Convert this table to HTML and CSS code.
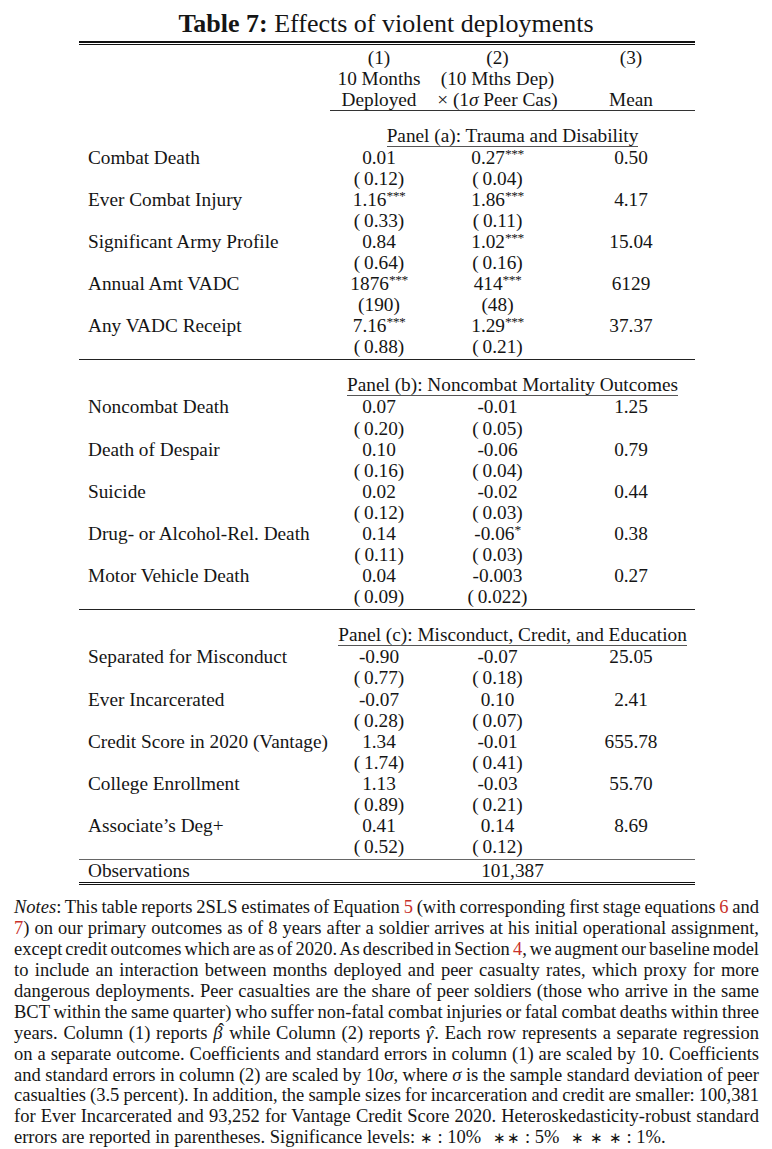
FILE: index.html
```html
<!DOCTYPE html>
<html lang="en">
<head>
<meta charset="utf-8">
<title>Table 7: Effects of violent deployments</title>
<link rel="stylesheet" href="styles.css">
</head>
<body>
<h1 class="title"><b>Table 7:</b> Effects of violent deployments</h1>

<div class="tbl">
  <div class="toprule"></div>

  <div class="grid head">
    <div></div><div class="c">(1)</div><div class="c">(2)</div><div class="c c3">(3)</div>
    <div></div><div class="c">10 Months</div><div class="c">(10 Mths Dep)</div><div class="c c3"></div>
    <div></div><div class="c">Deployed</div><div class="c">× (1<i>σ</i> Peer Cas)</div><div class="c c3">Mean</div>
  </div>
  <div class="cmid"></div>

  <div class="panel-head"><span>Panel (a): Trauma and Disability</span></div>
  <div class="grid body">
    <div class="lab">Combat Death</div><div class="c">0.01</div><div class="c">0.27<sup class="st">***</sup></div><div class="c c3">0.50</div>
    <div></div><div class="c">(&thinsp;0.12)</div><div class="c">(&thinsp;0.04)</div><div></div>
    <div class="lab">Ever Combat Injury</div><div class="c">1.16<sup class="st">***</sup></div><div class="c">1.86<sup class="st">***</sup></div><div class="c c3">4.17</div>
    <div></div><div class="c">(&thinsp;0.33)</div><div class="c">(&thinsp;0.11)</div><div></div>
    <div class="lab">Significant Army Profile</div><div class="c">0.84</div><div class="c">1.02<sup class="st">***</sup></div><div class="c c3">15.04</div>
    <div></div><div class="c">(&thinsp;0.64)</div><div class="c">(&thinsp;0.16)</div><div></div>
    <div class="lab">Annual Amt VADC</div><div class="c">1876<sup class="st">***</sup></div><div class="c">414<sup class="st">***</sup></div><div class="c c3">6129</div>
    <div></div><div class="c">(190)</div><div class="c">(48)</div><div></div>
    <div class="lab">Any VADC Receipt</div><div class="c">7.16<sup class="st">***</sup></div><div class="c">1.29<sup class="st">***</sup></div><div class="c c3">37.37</div>
    <div></div><div class="c">(&thinsp;0.88)</div><div class="c">(&thinsp;0.21)</div><div></div>
  </div>
  <div class="midrule"></div>

  <div class="panel-head"><span>Panel (b): Noncombat Mortality Outcomes</span></div>
  <div class="grid body">
    <div class="lab">Noncombat Death</div><div class="c">0.07</div><div class="c">-0.01</div><div class="c c3">1.25</div>
    <div></div><div class="c">(&thinsp;0.20)</div><div class="c">(&thinsp;0.05)</div><div></div>
    <div class="lab">Death of Despair</div><div class="c">0.10</div><div class="c">-0.06</div><div class="c c3">0.79</div>
    <div></div><div class="c">(&thinsp;0.16)</div><div class="c">(&thinsp;0.04)</div><div></div>
    <div class="lab">Suicide</div><div class="c">0.02</div><div class="c">-0.02</div><div class="c c3">0.44</div>
    <div></div><div class="c">(&thinsp;0.12)</div><div class="c">(&thinsp;0.03)</div><div></div>
    <div class="lab">Drug- or Alcohol-Rel. Death</div><div class="c">0.14</div><div class="c">-0.06<sup class="st">*</sup></div><div class="c c3">0.38</div>
    <div></div><div class="c">(&thinsp;0.11)</div><div class="c">(&thinsp;0.03)</div><div></div>
    <div class="lab">Motor Vehicle Death</div><div class="c">0.04</div><div class="c">-0.003</div><div class="c c3">0.27</div>
    <div></div><div class="c">(&thinsp;0.09)</div><div class="c">(&thinsp;0.022)</div><div></div>
  </div>
  <div class="midrule"></div>

  <div class="panel-head"><span>Panel (c): Misconduct, Credit, and Education</span></div>
  <div class="grid body">
    <div class="lab">Separated for Misconduct</div><div class="c">-0.90</div><div class="c">-0.07</div><div class="c c3">25.05</div>
    <div></div><div class="c">(&thinsp;0.77)</div><div class="c">(&thinsp;0.18)</div><div></div>
    <div class="lab">Ever Incarcerated</div><div class="c">-0.07</div><div class="c">0.10</div><div class="c c3">2.41</div>
    <div></div><div class="c">(&thinsp;0.28)</div><div class="c">(&thinsp;0.07)</div><div></div>
    <div class="lab">Credit Score in 2020 (Vantage)</div><div class="c">1.34</div><div class="c">-0.01</div><div class="c c3">655.78</div>
    <div></div><div class="c">(&thinsp;1.74)</div><div class="c">(&thinsp;0.41)</div><div></div>
    <div class="lab">College Enrollment</div><div class="c">1.13</div><div class="c">-0.03</div><div class="c c3">55.70</div>
    <div></div><div class="c">(&thinsp;0.89)</div><div class="c">(&thinsp;0.21)</div><div></div>
    <div class="lab">Associate’s Deg+</div><div class="c">0.41</div><div class="c">0.14</div><div class="c c3">8.69</div>
    <div></div><div class="c">(&thinsp;0.52)</div><div class="c">(&thinsp;0.12)</div><div></div>
  </div>
  <div class="obsrule"></div>
  <div class="grid obs">
    <div class="lab">Observations</div><div class="c span3">101,387</div>
  </div>
  <div class="bottomrule"></div>
</div>

<p class="notes">
  <span class="nl"><i>Notes</i>: This table reports 2SLS estimates of Equation <span class="ref">5</span> (with corresponding first stage equations <span class="ref">6</span> and</span>
  <span class="nl"><span class="ref">7</span>) on our primary outcomes as of 8 years after a soldier arrives at his initial operational assignment,</span>
  <span class="nl">except credit outcomes which are as of 2020. As described in Section <span class="ref">4</span>, we augment our baseline model</span>
  <span class="nl">to include an interaction between months deployed and peer casualty rates, which proxy for more</span>
  <span class="nl">dangerous deployments. Peer casualties are the share of peer soldiers (those who arrive in the same</span>
  <span class="nl">BCT within the same quarter) who suffer non-fatal combat injuries or fatal combat deaths within three</span>
  <span class="nl">years. Column (1) reports <i class="hat hat-tall">β</i> while Column (2) reports <i class="hat">γ</i>. Each row represents a separate regression</span>
  <span class="nl">on a separate outcome. Coefficients and standard errors in column (1) are scaled by 10. Coefficients</span>
  <span class="nl">and standard errors in column (2) are scaled by 10<i>σ</i>, where <i>σ</i> is the sample standard deviation of peer</span>
  <span class="nl">casualties (3.5 percent). In addition, the sample sizes for incarceration and credit are smaller: 100,381</span>
  <span class="nl">for Ever Incarcerated and 93,252 for Vantage Credit Score 2020. Heteroskedasticity-robust standard</span>
  <span class="nl last">errors are reported in parentheses. Significance levels: <span class="ast">∗</span>&thinsp;: 10%<span class="q"></span><span class="ast">∗∗</span>&thinsp;: 5%<span class="q"></span><span class="ast">∗ ∗ ∗</span>&thinsp;: 1%.</span>
</p>
</body>
</html>
```

FILE: styles.css
```css
html, body {
  margin: 0;
  padding: 0;
  background: #fff;
}

body {
  font-family: "Liberation Serif", "Times New Roman", serif;
  color: #151515;
  width: 772px;
}

.title {
  margin: 0;
  padding-top: 9px;
  font-size: 26px;
  line-height: 30px;
  font-weight: normal;
  text-align: center;
}

.title b {
  font-weight: bold;
}

.tbl {
  margin: 2px 0 0 79px;
  width: 616px;
  font-size: 19.3px;
}

.toprule {
  height: 1px;
  border-top: 2px solid #111;
  border-bottom: 1px solid #111;
}

.grid {
  display: grid;
  grid-template-columns: 251px 98px 139px 128px;
  white-space: nowrap;
}

.head {
  margin-top: 1.5px;
  grid-auto-rows: 21px;
  line-height: 21px;
}

.body {
  grid-auto-rows: 21.1px;
  line-height: 21.1px;
}

.c {
  text-align: center;
}

.lab {
  padding-left: 9px;
}

.cmid {
  margin-left: 251px;
  border-top: 1px solid #333;
}

.panel-head {
  margin: 14px 0 0 251px;
  display: flex;
  justify-content: center;
}

.panel-head span {
  line-height: 21px;
  border-bottom: 1.5px solid #555;
}

.st {
  font-size: 0.7em;
  line-height: 0;
  vertical-align: 0.42em;
  letter-spacing: -0.5px;
}

.midrule {
  margin-top: 2px;
  border-top: 1.5px solid #222;
}

.obsrule {
  margin-top: 2px;
  border-top: 1.5px solid #666;
}

.obs {
  line-height: 21px;
}

.span3 {
  grid-column: 2 / 5;
}

.bottomrule {
  margin-top: 0.5px;
  height: 1.5px;
  border-top: 1px solid #111;
  border-bottom: 1px solid #111;
}

.notes {
  margin: 12px 13px 0 14px;
  font-size: 18.5px;
  line-height: 20.9px;
}

.nl {
  display: block;
  text-align: justify;
  text-align-last: justify;
  word-spacing: -3px;
  white-space: normal;
}

.nl.last {
  text-align: left;
  text-align-last: left;
  word-spacing: 0;
}

.ref {
  color: #c8302a;
}

.hat {
  position: relative;
  display: inline-block;
  padding-right: 1px;
}

.hat::after {
  content: "ˆ";
  position: absolute;
  left: 0.18em;
  top: 0.02em;
  font-style: normal;
}

.hat-tall::after {
  left: 0.26em;
  top: -0.16em;
}

.ast {
  font-size: 0.8em;
  letter-spacing: 1px;
}

.q {
  display: inline-block;
  width: 12px;
}
```
